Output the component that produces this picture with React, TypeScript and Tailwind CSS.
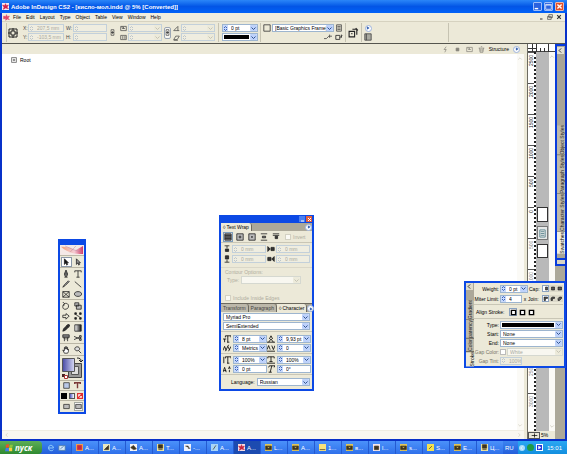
import type { ReactNode } from 'react'
import clsx from 'clsx'

function Icon({ d, fill, w = 8, className = '' }: { d: string; fill?: string; w?: number; className?: string }) {
  return (
    <svg
      width={w}
      height={w}
      viewBox="0 0 10 10"
      className={clsx('shrink-0', className)}
      fill={fill ?? 'none'}
      stroke="currentColor"
      strokeWidth={1}
      aria-hidden="true"
    >
      <path d={d} />
    </svg>
  )
}

const shapes = {
  frame: 'M1 1h8v8H1zM3 3h4v4H3zM5 0v3M5 7v3M0 5h3M7 5h3',
  scaleH: 'M1 2h8v6H1zM3 5h4M2 3h3v2',
  scaleV: 'M1 2h8v6H1zM4 3v4M7 3v4',
  angle: 'M1 8h8M1 8L7 2v6',
  shear: 'M1 8l3-5h5L6 8zM1 9h6',
  chain: 'M3 1h4v4H3zM3 5h4v4H3zM5 3v4',
  box: 'M1 1h8v8H1z',
  bolt: 'M6 1L3 5h3L4 9',
  page: 'M2 1h6v8H2zM3 3h4M3 5h4M3 7h4',
  trash: 'M1 3h8M4 1h2M2 3l1 6h4l1-6M4 4v4M6 4v4',
}

function Arrow({ muted }: { muted?: boolean }) {
  return (
    <span
      className={clsx(
        'pointer-events-none absolute inset-y-0 right-0 flex w-[7px] items-center justify-center rounded-[1px]',
        muted ? 'bg-[#eceada] text-[#c5c3b4]' : 'bg-[#bed2fb] text-[#31538f]',
      )}
    >
      <Icon d="M1 3l4 4 4-4" w={5} className="stroke-2" />
    </span>
  )
}

function Field({ label, value, drop, muted, width = 'w-[34px]' }: {
  label: string; value: string; drop?: boolean; muted?: boolean; width?: string
}) {
  return (
    <span
      className={clsx(
        'relative flex h-2 shrink-0 items-center border',
        width,
        muted ? 'border-[#c3d0da] bg-[#efede0]' : 'border-[#9db5cf] bg-white',
      )}
    >
      <span className={clsx('flex h-full w-[5px] items-center', muted ? 'text-[#bcc5cb]' : 'bg-[#c8d9fb] text-[#3c64ba]')}>
        <Icon d="M2 4l3-3 3 3M2 6l3 3 3-3" w={5} className="stroke-2" />
      </span>
      <input
        aria-label={label}
        defaultValue={value}
        disabled={muted}
        className={clsx('w-0 min-w-0 flex-1 bg-transparent pl-[3px] text-[5px] leading-[6px] outline-none', muted ? 'text-[#a9a99f]' : 'text-black')}
      />
      {drop && <Arrow muted={muted} />}
    </span>
  )
}

function Drop({ label, value, muted, id, className = 'flex-1' }: {
  label: string; value: string; muted?: boolean; id?: string; className?: string
}) {
  return (
    <span
      className={clsx(
        'relative flex h-2 min-w-0 border',
        className,
        muted ? 'border-[#d5d8d0] bg-[#f8f7f0]' : 'border-[#9db5cf] bg-white',
      )}
    >
      <select
        id={id}
        aria-label={label}
        disabled={muted}
        className={clsx('h-full w-full appearance-none bg-transparent pl-[2px] text-[5px] leading-[6px] outline-none', muted && 'text-[#a9a99f]')}
      >
        <option>{value}</option>
      </select>
      <Arrow muted={muted} />
    </span>
  )
}

// Drop-down whose current value is a solid black stroke
function StrokeDrop({ label, className = 'flex-1' }: { label: string; className?: string }) {
  return (
    <span className={clsx('relative flex h-2 border border-[#9db5cf] bg-white', className)}>
      <select aria-label={label} className="h-full w-full appearance-none bg-transparent text-[5px] outline-none">
        <option value="solid" />
      </select>
      <span className="pointer-events-none absolute inset-y-px left-px right-2 bg-black" />
      <Arrow />
    </span>
  )
}

function Check({ label, className }: { label: string; className?: string }) {
  return (
    <label className={clsx('flex items-center gap-[2px] text-[#aeac9e]', className)}>
      <input type="checkbox" disabled className="size-[6px] appearance-none border border-[#d3d1c3] bg-[#fbfaf5]" />
      {label}
    </label>
  )
}

function RoundButton({ label }: { label: string }) {
  return (
    <button aria-label={label} className="flex size-[7px] items-center justify-center rounded-full border border-[#9eb4dd] bg-white text-[#2250a8]">
      <Icon d="M3 2l5 3-5 3z" fill="currentColor" w={4} />
    </button>
  )
}

function Divider() {
  return <span className="my-px w-px shrink-0 self-stretch bg-[#c6c3b2]" />
}

const menus = ['File', 'Edit', 'Layout', 'Type', 'Object', 'Table', 'View', 'Window', 'Help']

function TitleBar() {
  return (
    <header className="flex h-[13px] shrink-0 items-center gap-[2px] bg-linear-to-b from-[#2b86f8] via-[#0355e6] to-[#0162f8] pl-[2px] pr-[3px]">
      <span className="flex size-[7px] items-center justify-center bg-[#f7e8ed] text-[#d3244c]">
        <Icon d="M5 1l1 3 3-1-2 3 2 2-4-1-3 2 1-3-2-3 3 1z" fill="currentColor" w={7} />
      </span>
      <h1 className="truncate text-[6px] leading-[10px] font-bold text-white">
        Adobe InDesign CS2 - [кисло-мол.indd @ 5% [Converted]]
      </h1>
      <div className="ml-auto flex gap-[2px] text-white">
        <button aria-label="Minimize" className="flex size-[9px] items-center justify-center rounded-[1px] border border-[#9dbdf8] bg-[#2b62df]">
          <Icon d="M1 8h5" w={7} className="stroke-2" />
        </button>
        <button aria-label="Restore" className="flex size-[9px] items-center justify-center rounded-[1px] border border-[#9dbdf8] bg-[#2b62df]">
          <Icon d="M1 2h8v7H1zM1 3h8" w={7} />
        </button>
        <button aria-label="Close" className="flex size-[9px] items-center justify-center rounded-[1px] border border-[#f0b6a4] bg-[#e2502c]">
          <Icon d="M2 2l6 6M8 2l-6 6" w={7} className="stroke-2" />
        </button>
      </div>
    </header>
  )
}

function MenuBar() {
  return (
    <nav className="flex h-[9px] shrink-0 items-center border-b border-[#d6d2c0] bg-[#efedde] pl-px pr-[3px] leading-[8px]">
      <Icon d="M1 3l3 1 1-3 1 3 3-1-2 3 2 2-3-1-2 2v-3l-3 1z" fill="currentColor" w={7} className="mr-[3px] text-[#e0496b]" />
      <div className="flex gap-[5px]">
        {menus.map(m => <button key={m}>{m}</button>)}
      </div>
      <div className="ml-auto flex gap-[3px] text-[#333]">
        <button aria-label="Minimize document"><Icon d="M2 8h5" w={5} className="stroke-2" /></button>
        <button aria-label="Restore document"><Icon d="M3 1h6v5H3zM1 4h6v5H1z" w={6} /></button>
        <button aria-label="Close document"><Icon d="M2 2l6 6M8 2l-6 6" w={6} className="stroke-2" /></button>
      </div>
    </nav>
  )
}

function Pair({ children, className }: { children: ReactNode; className?: string }) {
  return <div className={clsx('flex shrink-0 flex-col gap-px', className)}>{children}</div>
}

function Line({ children }: { children: ReactNode }) {
  return <div className="flex h-2 items-center gap-px">{children}</div>
}

function ControlBar() {
  return (
    <div className="flex h-[22px] shrink-0 items-center overflow-hidden border-b border-[#55554e] bg-[#ece9d8] pl-1 leading-[8px] text-[#444]">
      <Divider />
      <Icon d={shapes.frame} w={10} className="ml-px mr-[5px] text-[#222]" />
      <Pair>
        <Line><span className="w-1">X:</span><Field label="X" value="207,5 mm" muted width="w-9" /></Line>
        <Line><span className="w-1">Y:</span><Field label="Y" value="-103,5 mm" muted width="w-9" /></Line>
      </Pair>
      <Pair className="ml-[2px]">
        <Line><span className="w-[6px]">W:</span><Field label="W" value="" muted /></Line>
        <Line><span className="w-[6px]">H:</span><Field label="H" value="" muted /></Line>
      </Pair>
      <Icon d={shapes.chain} w={7} className="ml-[2px] text-[#444]" />
      <Pair className="ml-1">
        <Line><Icon d={shapes.scaleH} w={7} /><Field label="Scale X" value="" drop muted /></Line>
        <Line><Icon d={shapes.scaleV} w={7} /><Field label="Scale Y" value="" drop muted /></Line>
      </Pair>
      <button aria-label="Constrain proportions" className="mx-[2px] flex h-3 w-[7px] items-center justify-center rounded-[2px] border border-[#9ba6b5] bg-[#f7f6f2]">
        <Icon d={shapes.chain} w={7} className="text-[#444]" />
      </button>
      <Pair>
        <Line><Icon d={shapes.angle} w={7} /><Field label="Rotation" value="" drop muted /></Line>
        <Line><Icon d={shapes.shear} w={7} /><Field label="Shear" value="" drop muted /></Line>
      </Pair>
      <span className="mx-[3px] flex self-stretch"><Divider /></span>
      <Pair>
        <Field label="Stroke weight" value="0 pt" drop width="w-9" />
        <StrokeDrop label="Stroke type" className="w-9" />
      </Pair>
      <span className="mx-[2px] flex self-stretch"><Divider /></span>
      <Pair>
        <Line>
          <Icon d={shapes.box} className="text-[#333]" />
          <Drop label="Object style" value="[Basic Graphics Frame]" className="w-[62px] shrink-0 text-black" />
          <Icon d={shapes.page} />
        </Line>
        <div className="flex h-2 justify-end gap-[3px]">
          <Icon d="M0 7h3l3-3h4M7 2v4" />
          <Icon d="M1 3h5v5H1zM6 6l3-3M8 2v4" className="text-[#222]" />
        </div>
      </Pair>
      <span className="mx-[2px] flex self-stretch"><Divider /></span>
      <Icon d="M1 4h5v5H1zM3 6h1M4 2h4v5M7 1l2 2" w={11} className="text-[#222]" />
      <span className="mx-[2px] flex self-stretch"><Divider /></span>
      <Pair className="items-center">
        <span className="flex h-2 items-center"><RoundButton label="Quick apply" /></span>
        <Icon d="M1 1h8v8H1zM3 1v8" fill="#a9a9a0" className="text-[#444]" />
      </Pair>
      <span className="ml-[76px] flex self-stretch"><Divider /></span>
    </div>
  )
}

function StructurePane() {
  return (
    <section className="flex min-w-0 flex-1 flex-col bg-white leading-[8px]">
      <div className="flex h-[10px] shrink-0 items-center justify-end bg-[#ece9d8] pr-1">
        <div className="mr-1 flex gap-[5px] text-[#85837a]">
          <Icon d={shapes.bolt} w={7} />
          <Icon d="M3 3h4v4H3z" fill="currentColor" w={7} />
          <Icon d={shapes.scaleH} w={7} />
          <Icon d={shapes.trash} w={7} />
        </div>
        <span className="mr-1">Structure</span>
        <RoundButton label="Structure menu" />
      </div>
      <div className="flex flex-1 justify-between">
        <div className="flex h-3 items-center gap-[3px] pl-[9px]">
          <Icon d="M1 1h8v8H1zM3 4h4M3 6h4" w={6} className="text-[#333]" />
          Root
        </div>
        <div className="flex w-[7px] flex-col justify-between bg-[#fbfaf6] py-[2px] text-[#cbc8b8]">
          <Icon d="M2 6l3-3 3 3" w={6} />
          <Icon d="M2 4l3 3 3-3" w={6} />
        </div>
      </div>
      <div className="flex h-[9px] shrink-0 items-center justify-between border-t border-[#efede2] bg-[#f8f7f0] px-[2px] text-[#cbc8b8]">
        <Icon d="M6 2L3 5l3 3" w={6} />
        <Icon d="M4 2l3 3-3 3" w={6} />
      </div>
    </section>
  )
}

const rulerMarks = ['2500', '2000', '1500', '1000', '500', '0', '500', '1000', '1500', '2000', '2500', '3000']

function DocumentPane() {
  return (
    <section className="flex w-7 shrink-0 flex-col border-l border-[#6d6b62] bg-white leading-[7px]">
      <div className="flex h-2 shrink-0 border-b border-[#444]">
        <svg width="22" height="8" className="text-[#333]" stroke="currentColor" aria-hidden="true">
          <path d="M4.5 0v8M0 4.5h8M8.5 0v8M12.5 4v4M16.5 4v4M20.5 0v8" fill="none" />
        </svg>
      </div>
      <div className="flex min-h-0 flex-1">
        <div className="flex w-2 flex-col overflow-hidden border-r-2 border-dotted border-[#222] bg-white">
          {rulerMarks.map((m, i) => (
            <span key={i} className={clsx('h-[31px] w-[6px] shrink-0 rotate-180 border-b border-[#555] pb-[2px] text-right leading-[6px] [writing-mode:vertical-rl]', i > 5 ? 'text-[#888]' : 'text-[#222]')}>
              {m}
            </span>
          ))}
        </div>
        <div className="flex w-[13px] flex-col items-center gap-1 bg-[#b9b9b9] pt-[155px]">
          <span className="h-[15px] w-[11px] border border-[#333] bg-white" />
          <span className="flex h-[14px] w-[11px] items-center justify-center border border-[#777] bg-[#e6e8e8] text-[#5d8790]">
            <Icon d={shapes.page} w={9} />
          </span>
          <span className="h-[14px] w-[11px] border border-[#333] bg-white" />
        </div>
        <div className="flex flex-1 flex-col justify-between bg-[#fbfaf6] py-[2px] text-[#bdbaad]">
          <Icon d="M2 6l3-3 3 3" w={6} />
          <Icon d="M2 4l3 3 3-3" w={6} />
        </div>
      </div>
      <div className="flex h-2 shrink-0 items-center gap-px bg-[#ece9d8]">
        <button aria-label="Zoom level" className="flex h-[7px] w-3 items-center justify-center border border-[#555]">
          <Icon d="M1 5h8M5 2v6" w={7} />
        </button>
        5%
      </div>
    </section>
  )
}

function Dock() {
  return (
    <aside className="flex w-[10px] shrink-0 flex-col bg-[#aca899] leading-[7px]">
      <div className="flex h-[222px] flex-col border-2 border-r-0 border-[#083bdc] bg-[#a9a597]">
        <button aria-label="Expand dock" className="my-px size-[7px] bg-[#e3e0d2]">
          <Icon d="M6 2L3 5l3 3" w={7} />
        </button>
        <div className="mb-1 mt-auto flex shrink-0 flex-col">
          {['Object Styles', 'Paragraph Styles', 'Character Styles'].map(t => (
            <button key={t} className="w-2 shrink-0 rotate-180 whitespace-nowrap border-t border-[#6e6b5f] bg-[#bdb9aa] py-[2px] text-[#222] [writing-mode:vertical-rl]">{t}</button>
          ))}
          <button className="w-2 shrink-0 rotate-180 whitespace-nowrap bg-[#f1efe2] py-[2px] [writing-mode:vertical-rl]">Swatches</button>
        </div>
        <span className="h-[6px] w-full shrink-0 border-t-2 border-[#083bdc] bg-[#d8d4c4]" />
      </div>
    </aside>
  )
}

const tools: { label: string; d: string; fill?: string }[][] = [
  [
    { label: 'Selection', d: 'M3 1v7l2-2 1 3 1-1-1-2h2z', fill: '#111' },
    { label: 'Direct selection', d: 'M3 1v7l2-2 1 3 1-1-1-2h2z', fill: '#999' },
  ],
  [
    { label: 'Pen', d: 'M5 0L3 5l1 3h2l1-3zM5 3v3M3 9h4', fill: '#888' },
    { label: 'Type', d: 'M1 3V1h8v2M5 1v8M3 9h4' },
    { label: 'Pencil', d: 'M1 9l2-3 5-5 1 1-5 5z', fill: '#aaa' },
    { label: 'Line', d: 'M1 2l8 7' },
    { label: 'Rectangle frame', d: 'M1 2h8v7H1zM1 2l8 7M9 2L1 9' },
    { label: 'Ellipse', d: 'M5 2c6 0 6 6 0 6s-6-6 0-6', fill: '#bbb' },
  ],
  [
    { label: 'Rotate', d: 'M3 2c6-2 7 6 2 7s-5-5-2-7l-1 3M3 2L1 0' },
    { label: 'Scale', d: 'M1 1h5v4H1zM3 4h6v5H3z', fill: '#bbb' },
    { label: 'Shear', d: 'M1 4h4V2l4 3-4 4V7H1z' },
    { label: 'Free transform', d: 'M1 1h2v2H1zM1 7h2v2H1zM7 1h2v2H7zM7 7h2v2H7zM3 4l4 2', fill: '#222' },
  ],
  [
    { label: 'Eyedropper', d: 'M1 9l1-3 4-4 2 2-4 4zM6 2l2-2 2 2-2 2z', fill: '#333' },
    { label: 'Gradient', d: 'M1 1h8v8H1z', fill: 'url(#toolGradient)' },
    { label: 'Button', d: 'M1 1h8v3H1zM3 4v5M5 4v3M7 4v5M1 4l2 2M9 4L7 6', fill: '#888' },
    { label: 'Scissors', d: 'M0 3l7 3 2-1M0 7l7-3 2 1M7 6h2v2H7zM7 2h2v2H7z' },
  ],
  [
    { label: 'Hand', d: 'M3 9L1 5l2 1V2h1v2-3h2v3-2h1v3l1-1v3L7 9z', fill: '#fff' },
    { label: 'Zoom', d: 'M4 1c4 0 4 5 0 5s-4-5 0-5M6 6l3 3', fill: '#ddd' },
  ],
]

function ToolsPalette() {
  return (
    <aside className="absolute left-[58px] top-[239px] flex w-7 flex-col border-2 border-t-[6px] border-[#0c49e5] bg-[#ece9d8] text-[#222]">
      <svg viewBox="0 0 24 11" className="h-[11px] w-full border-b border-[#bdb9a8]" preserveAspectRatio="none" aria-hidden="true">
        <defs>
          <linearGradient id="feather"><stop stopColor="#f0a17b" /><stop offset=".6" stopColor="#f5ccd4" /><stop offset="1" stopColor="#d23a67" /></linearGradient>
          <linearGradient id="toolGradient"><stop stopColor="#fff" /><stop offset="1" stopColor="#111" /></linearGradient>
        </defs>
        <path d="M0 0h24v11H0z" fill="#f5e9e7" />
        <path d="M1 2c7 0 11 1 14 4l8-5v9c-8 0-15-1-22-8" fill="url(#feather)" />
        <path d="M5 1l8 4 9 3M10 8l6-7" stroke="#b8839b" strokeWidth=".5" fill="none" />
      </svg>
      {tools.map((group, g) => (
        <div key={g} className="grid grid-cols-2 justify-items-center border-b border-[#bab6a5] pt-px">
          {group.map((t, i) => (
            <button key={t.label} aria-label={t.label} className={clsx('flex h-[10px] w-[11px] items-center justify-center', g === 0 && i === 0 && 'border border-[#8a97a8] bg-white')}>
              <Icon d={t.d} fill={t.fill} />
            </button>
          ))}
        </div>
      ))}
      <svg viewBox="0 0 24 24" className="h-6 w-full" fill="none" aria-hidden="true">
        <defs><linearGradient id="fillSwatch"><stop stopColor="#4749a4" /><stop offset="1" stopColor="#d7daf5" /></linearGradient></defs>
        <path d="M8.500 7.500h13v14h-13z" fill="#999" stroke="#444" />
        <path d="M11.500 10.500h7v8h-7z" fill="#ddd" stroke="#555" />
        <path d="M2.500 2.500h12v13h-12z" fill="url(#fillSwatch)" stroke="#555" />
        <path d="M17 2c3 0 4 1 4 3M19 4l2 2 2-2" stroke="#222" />
        <path d="M2 18h3v3H2z" fill="#422" />
        <path d="M4.500 19.500h3v3h-3z" fill="#fff" stroke="#a33" />
      </svg>
      <div className="flex h-[10px] items-center justify-center gap-1 border-t border-[#bab6a5]">
        <button aria-label="Container"><Icon d={shapes.box} fill="#bac9e8" w={7} /></button>
        <button aria-label="Text"><Icon d="M1 3V1h8v2M5 1v8" w={7} className="stroke-2 text-[#7d3a3a]" /></button>
      </div>
      <div className="flex h-[10px] items-center justify-center gap-[2px] border-t border-[#bab6a5]">
        <button aria-label="Apply color" className="size-[6px] bg-black" />
        <button aria-label="Apply gradient" className="size-[6px] border border-[#555] bg-linear-to-r from-[#5557b9] to-white" />
        <button aria-label="Apply none" className="size-[6px]"><Icon d="M1 9l8-8M1 1h8v8H1z" fill="#fff" w={6} className="stroke-2 text-[#e03030]" /></button>
      </div>
      <div className="flex h-3 items-center justify-center gap-[3px] border-t border-[#bab6a5]">
        <button aria-label="Normal view" className="flex size-[9px] items-center justify-center"><Icon d="M1 2h8v6H1z" fill="#bbb" w={7} /></button>
        <button aria-label="Preview" className="flex size-[9px] items-center justify-center border border-[#a3a79f] bg-white"><Icon d="M1 2h8v6H1z" fill="#bbb" w={7} /></button>
      </div>
    </aside>
  )
}

function Tab({ children, active }: { children: ReactNode; active?: boolean }) {
  return (
    <button className={clsx('h-2 whitespace-nowrap rounded-tr-[3px] border-r border-[#6d6a5f] px-[2px]', active ? 'bg-[#ece9d8]' : 'bg-[#bcb8aa] text-[#444]')}>
      {active && <span className="mr-px">◊</span>}
      {children}
    </button>
  )
}

const wraps = [
  { label: 'No text wrap', d: 'M1 1h8v8H1zM1 3h8M1 5h8M1 7h8', fill: '#777' },
  { label: 'Wrap around bounding box', d: 'M1 1h8v8H1zM4 4h2v2H4z', fill: '#bbb' },
  { label: 'Wrap around shape', d: 'M1 1h8v8H1zM5 4l1 1-1 1-1-1z', fill: '#bbb' },
  { label: 'Jump object', d: 'M1 1h8M1 9h8M3 4h4v2H3z', fill: '#777' },
  { label: 'Jump to next column', d: 'M1 1h8M1 3h8M4 4h3v3H4z', fill: '#333' },
]

const glyphs = {
  size: 'M3 3V1h7v2M6 1v8M5 9h3M0 5h4M2 5v4',
  leading: 'M3 5l2-4 2 4M2 9l3-4 3 4M0 9h10',
  kern: 'M0 8l2-5 2 5M6 3l2 4M10 3L7 9M3 9L7 1',
  track: 'M0 7l2-5 2 5M6 2l2 5 2-5M0 9h10',
  vscale: 'M3 3V1h7v2M6 1v8M5 9h3M1 1v8',
  hscale: 'M1 3V1h8v2M5 1v6M3 7h4M0 9h10',
  shift: 'M0 9l2-6 2 6M1 7h3M7 5l1-3 1 3M8 6v3',
  skew: 'M2 3l1-2h7L9 3M6 1L4 9M2 9h4',
}

function CharRow({ left, right }: {
  left: [string, string, string, boolean]; right: [string, string, string, boolean]
}) {
  return (
    <div className="flex h-[9px] items-center justify-between">
      {[left, right].map(([label, d, value, drop]) => (
        <div key={label} className="flex items-center gap-[2px] text-black">
          <Icon d={d} w={8} />
          <Field label={label} value={value} drop={drop} />
        </div>
      ))}
    </div>
  )
}

function TextPalette() {
  return (
    <aside className="absolute left-[219px] top-[215px] flex w-[95px] flex-col border-2 border-t-0 border-[#0c49e5] bg-[#ece9d8] leading-[8px]">
      <div className="flex h-2 items-center justify-end gap-px bg-[#0c49e5]">
        <button aria-label="Minimize palette" className="flex size-[6px] items-center justify-center bg-[#4a7ff0] text-white"><Icon d="M2 8h6" w={5} className="stroke-2" /></button>
        <button aria-label="Close palette" className="flex size-[6px] items-center justify-center bg-[#e2603c] text-white"><Icon d="M2 2l6 6M8 2l-6 6" w={5} className="stroke-2" /></button>
      </div>
      <div className="flex h-2 items-center bg-[#aca899]">
        <Tab active>Text Wrap</Tab>
        <span className="ml-auto"><RoundButton label="Text wrap menu" /></span>
      </div>
      <div className="flex h-3 items-center gap-[2px] border-b border-[#c9c6b6] px-[2px] text-[#222]">
        {wraps.map((w, i) => (
          <button key={w.label} aria-label={w.label} className={clsx('flex size-[10px] items-center justify-center', i === 0 && 'border border-[#7f9db9] bg-white')}>
            <Icon d={w.d} fill={w.fill} />
          </button>
        ))}
        <Check label="Invert" className="ml-[2px]" />
      </div>
      <div className="flex flex-col gap-[2px] px-[2px] pb-1 pt-[2px] text-[#222]">
        {[['Top', 'Left'], ['Bottom', 'Right']].map(([a, b]) => (
          <div key={a} className="flex h-2 items-center justify-between">
            <Icon d={a === 'Top' ? 'M2 1h6M5 1v3M3 5h4v3H3z' : 'M2 9h6M5 9V6M3 1h4v4H3z'} fill="#333" />
            <Field label={`${a} offset`} value="0 mm" muted />
            <Icon d={b === 'Left' ? 'M1 2v6l3-3zM5 3h4v4H5z' : 'M1 3h4v4H1zM9 2v6L6 5z'} fill="#333" />
            <Field label={`${b} offset`} value="0 mm" muted />
          </div>
        ))}
      </div>
      <div className="border-t border-[#dad7c8] px-1 text-[#b0ae9f]">
        <div>Contour Options:</div>
        <div className="flex items-center gap-[2px]">
          <label htmlFor="contour" className="pl-[2px]">Type:</label>
          <Drop id="contour" label="Contour type" value="" muted className="w-[60px]" />
        </div>
        <Check label="Include Inside Edges" className="mb-px mt-[10px]" />
      </div>
      <div className="flex h-[9px] items-end border-t border-[#6d6a5f] bg-[#aca899]">
        <Tab>Transform</Tab>
        <Tab>Paragraph</Tab>
        <Tab active>Character</Tab>
        <span className="ml-auto"><RoundButton label="Character menu" /></span>
      </div>
      <div className="flex flex-col gap-px px-[2px] py-px">
        <Drop label="Font family" value="Myriad Pro" className="w-full" />
        <Drop label="Font style" value="SemiExtended" className="w-full" />
      </div>
      <div className="border-t border-[#c9c6b6] px-[2px] pb-px pt-[2px]">
        <CharRow left={['Font size', glyphs.size, '8 pt', true]} right={['Leading', glyphs.leading, '9,93 pt', true]} />
        <CharRow left={['Kerning', glyphs.kern, 'Metrics', true]} right={['Tracking', glyphs.track, '0', true]} />
      </div>
      <div className="border-t border-[#c9c6b6] px-[2px] py-px">
        <CharRow left={['Vertical scale', glyphs.vscale, '100%', true]} right={['Horizontal scale', glyphs.hscale, '100%', true]} />
        <CharRow left={['Baseline shift', glyphs.shift, '0 pt', false]} right={['Skew', glyphs.skew, '0°', false]} />
      </div>
      <div className="flex items-center gap-[2px] border-t border-[#c9c6b6] pb-[3px] pl-[10px] pr-[2px] pt-[3px]">
        <label htmlFor="language">Language:</label>
        <Drop id="language" label="Language" value="Russian" />
      </div>
    </aside>
  )
}

function StrokeRow({ label, muted, children }: { label: string; muted?: boolean; children: ReactNode }) {
  return (
    <div className="flex h-[9px] items-center gap-px">
      <span className={clsx('w-[25px] shrink-0 whitespace-nowrap text-right', muted && 'text-[#77756a]')}>{label}</span>
      {children}
    </div>
  )
}

function StrokeButtons({ names, d }: { names: string[]; d: string[] }) {
  return (
    <span className="flex shrink-0">
      {names.map((n, i) => (
        <button key={n} aria-label={n} className={clsx('flex size-[7px] items-center justify-center', i === 0 ? 'border border-[#8ba2bf] bg-white' : 'bg-[#dcd9ca]')}>
          <Icon d={d[i]} fill="#555" w={5} />
        </button>
      ))}
    </span>
  )
}

function StrokePalette() {
  return (
    <aside className="absolute right-px top-[281px] flex h-[87px] w-[102px] border-2 border-[#0c49e5] bg-[#ece9d8] leading-[8px]">
      <div className="flex w-2 shrink-0 flex-col justify-end bg-[#aca899]">
        <button aria-label="Stroke menu" className="mb-auto size-[7px] bg-[#dedbcb]"><Icon d="M6 2L3 5l3 3" w={7} /></button>
        {['Gradient', 'parency', 'Color'].map(t => (
          <button key={t} className="w-2 shrink-0 rotate-180 whitespace-nowrap border-t border-[#6d6a5f] bg-[#bdb9aa] text-[#222] [writing-mode:vertical-rl]">{t}</button>
        ))}
        <button className="w-2 shrink-0 rotate-180 whitespace-nowrap bg-[#ece9d8] py-[2px] [writing-mode:vertical-rl]">Stroke</button>
      </div>
      <div className="flex min-w-0 flex-1 flex-col justify-between py-px pr-px">
        <div className="flex flex-col gap-px border-b border-[#c9c6b6] pb-px">
          <StrokeRow label="Weight:">
            <Field label="Weight" value="0 pt" drop width="w-7" />
            <span className="flex-1">Cap:</span>
            <StrokeButtons names={['Butt cap', 'Round cap', 'Projecting cap']} d={['M5 2h4v6H5z', 'M3 2h6v6H3z', 'M2 2h7v6H2z']} />
          </StrokeRow>
          <StrokeRow label="Miter Limit:">
            <Field label="Miter limit" value="4" width="w-[22px]" />
            <span className="w-1 text-center">x</span>
            <span className="flex-1">Join:</span>
            <StrokeButtons names={['Miter join', 'Round join', 'Bevel join']} d={['M2 9V2h7v3H5v4z', 'M2 9V4l3-2h4v3H5v4z', 'M2 9V5l3-3h4v3L5 9z']} />
          </StrokeRow>
        </div>
        <div className="flex items-center gap-[5px] border-b border-[#c9c6b6] py-[2px] pl-[2px]">
          <span>Align Stroke:</span>
          <span className="flex gap-px">
            {['Center', 'Inside', 'Outside'].map((n, i) => (
              <button key={n} aria-label={`Align stroke ${n}`} className={clsx('flex size-2 items-center justify-center', i === 0 && 'border border-[#8ba2bf] bg-white')}>
                <Icon d="M2 2h6v6H2z" fill="#fff" w={7} className="stroke-2" />
              </button>
            ))}
          </span>
        </div>
        <div>
          <StrokeRow label="Type:"><StrokeDrop label="Stroke type" /></StrokeRow>
          <StrokeRow label="Start:"><Drop label="Start" value="None" /></StrokeRow>
          <StrokeRow label="End:"><Drop label="End" value="None" /></StrokeRow>
          <StrokeRow label="Gap Color:" muted>
            <span className="size-[6px] shrink-0 border border-[#bbb] bg-white" />
            <Drop label="Gap color" value="White" muted />
          </StrokeRow>
          <StrokeRow label="Gap Tint:" muted><Field label="Gap tint" value="100%" muted width="w-[22px]" /></StrokeRow>
        </div>
      </div>
    </aside>
  )
}

const tasks = [
  { name: 'A...', tint: 'bg-[#f0a050]', d: 'M2 2h6v6H2z' },
  { name: 'A...', tint: 'bg-[#e9e9c0]', d: 'M2 8l6-6v6z' },
  { name: 'A...', tint: 'bg-[#f4f4f4]', d: 'M1 5l4-3 4 5-4 1z' },
  { name: 'T...', tint: 'bg-[#f3e9a0]', d: 'M2 1h6v5H2zM2 8h6' },
  { name: '-...', tint: 'bg-[#eef3ff]', d: 'M2 3h4v3h3' },
  { name: 'A...', tint: 'bg-[#a9d5f8]', d: 'M3 8l4-6' },
  { name: 'A...', tint: 'bg-[#f7dce2]', d: 'M5 1l1 3 3-1-2 3 2 2-4-1-3 2 1-3-2-3 3 1z', active: true },
  { name: 'L...', tint: 'bg-[#e0c65a]', d: 'M1 3h8v5H1zM2 4l3 2 3-2' },
  { name: 'A...', tint: 'bg-[#e0c65a]', d: 'M1 3h8v5H1zM2 4l3 2 3-2' },
  { name: '1...', tint: 'bg-[#f8e27a]', d: 'M1 8h8' },
  { name: 'в...', tint: 'bg-[#e0c65a]', d: 'M1 3h8v5H1zM2 4l3 2 3-2' },
  { name: 'l...', tint: 'bg-[#f6e8ea]', d: 'M2 3h6v5H2z' },
  { name: 's...', tint: 'bg-[#e0c65a]', d: 'M1 3h8v5H1zM2 4l3 2 3-2' },
  { name: 'S...', tint: 'bg-[#f5e14e]', d: 'M3 7l4-4' },
  { name: 'E...', tint: 'bg-[#e0c65a]', d: 'M1 3h8v5H1zM2 4l3 2 3-2' },
  { name: 'Ц...', tint: 'bg-[#f3e9a0]', d: 'M2 1h6v5H2zM2 8h6' },
]

function Taskbar() {
  return (
    <footer className="flex h-[13px] shrink-0 items-stretch bg-linear-to-b from-[#3c84f0] to-[#245edb] text-[6px] leading-[8px] text-white">
      <button className="flex w-[42px] shrink-0 items-center gap-[2px] rounded-r-[4px] bg-linear-to-b from-[#5cae57] to-[#2f8a30] pl-[5px] font-['Open_Sans',sans-serif] text-[8px] leading-[12px] font-bold italic">
        <svg width="8" height="8" viewBox="0 0 10 10" aria-hidden="true">
          <path d="M1 1l4-1v4L1 5z" fill="#e8532d" />
          <path d="M6 1l4 0-1 4H5z" fill="#8cc63e" />
          <path d="M1 5l4 0v4L0 9z" fill="#3f7fe8" />
          <path d="M5 5h4v4H5z" fill="#f8cf3c" />
        </svg>
        пуск
      </button>
      <div className="flex shrink-0 items-center gap-[3px] px-[5px]">
        <button aria-label="Internet Explorer"><Icon d="M8 5H2c0-5 6-4 6 0M2 5c0 4 5 4 6 2" className="text-[#a6e0ff]" /></button>
        <button aria-label="Show desktop"><Icon d="M1 2h8v6H1zM3 6l4-3" fill="#d5e7f8" className="text-[#4878a8]" /></button>
      </div>
      {tasks.map((t, i) => (
        <button
          key={i}
          className={clsx(
            'flex min-w-0 flex-1 items-center gap-[2px] overflow-hidden border-l border-[#245ad0] pl-1',
            t.active ? 'bg-[#1c4bb0]' : 'bg-linear-to-b from-[#4b91fa] to-[#2f70ea]',
          )}
        >
          <span className={clsx('size-[7px] shrink-0', t.tint, t.active || t.tint === 'bg-[#f0a050]' ? 'text-[#c62843]' : 'text-[#3c3420]')}>
            <Icon d={t.d} fill="currentColor" w={7} />
          </span>
          {t.name}
        </button>
      ))}
      <span className="flex w-[15px] shrink-0 items-center pl-[2px]">RU</span>
      <div className="flex shrink-0 items-center gap-[2px] bg-linear-to-b from-[#2aa7f2] to-[#128fdf] pl-px pr-[5px]">
        <span className="size-[6px] rounded-full bg-[#a7dcfb]"><Icon d="M6 2L3 5l3 3" w={6} /></span>
        <span className="size-[7px] rounded-full bg-[#1e9a45]" />
        <span className="size-[7px] border border-white bg-[#2636d8]"><Icon d="M3 2l5 3-5 3z" fill="#fff" w={5} /></span>
        <time className="pl-[2px]">15:01</time>
      </div>
    </footer>
  )
}

export default function App() {
  return (
    <div className="relative flex h-screen w-full flex-col overflow-hidden bg-[#0b46df] font-['Liberation_Sans',Arial,sans-serif] text-[5px] text-black">
      <TitleBar />
      <main className="flex min-h-0 flex-1 flex-col border-b-2 border-l-2 border-r-2 border-[#0831c9]">
        <MenuBar />
        <ControlBar />
        <div className="flex min-h-0 flex-1">
          <StructurePane />
          <span className="w-[3px] shrink-0 bg-[#ece9d8]" />
          <DocumentPane />
          <Dock />
        </div>
      </main>
      <Taskbar />
      <ToolsPalette />
      <TextPalette />
      <StrokePalette />
    </div>
  )
}
